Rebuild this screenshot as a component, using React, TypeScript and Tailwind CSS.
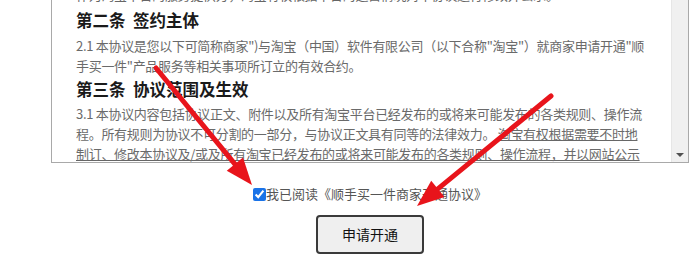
import React from "react";

const font = { fontFamily: '"Microsoft YaHei", "Noto Sans CJK SC", sans-serif' };

function Arrow({ x1, y1, x2, y2 }: { x1: number; y1: number; x2: number; y2: number }) {
  const dx = x2 - x1;
  const dy = y2 - y1;
  const len = Math.hypot(dx, dy);
  const ux = dx / len;
  const uy = dy / len;
  const nx = -uy;
  const ny = ux;
  const hl = 27;
  const hw = 10.5;
  const bx = x2 - hl * ux;
  const by = y2 - hl * uy;
  const pts = `${x2},${y2} ${bx + hw * nx},${by + hw * ny} ${bx - hw * nx},${by - hw * ny}`;
  return (
    <g>
      <line x1={x1} y1={y1} x2={bx + ux * 2} y2={by + uy * 2} stroke="#e8141b" strokeWidth={5} strokeLinecap="round" />
      <polygon points={pts} fill="#e8141b" />
    </g>
  );
}

export default function App() {
  return (
    <div className="relative w-[700px] h-[274px] bg-white overflow-hidden" style={font}>
      <div className="ml-[51px] w-[638px] flex flex-col items-center">
        <div className="w-full h-[163px] border-x border-b border-[#a9a9a9] flex overflow-hidden">
          <div className="flex-1 overflow-hidden pl-[24px]">
            <div className="mt-[-15px] flex flex-col whitespace-nowrap font-['Noto_Sans_CJK_SC',sans-serif]">
              <div className="h-[20px] leading-[20px] text-[13px] text-[#666] tracking-[-0.3px]">
                作为淘宝平台的服务提供方，淘宝有权根据平台的运营情况对本协议进行修改并公示。
              </div>
              <div className="mt-[3px] h-[24px] leading-[24px] text-[16.5px] font-bold text-[#1a1a1a]">
                第二条&nbsp;&nbsp;签约主体
              </div>
              <div className="mt-[4px] text-[13px] leading-[20px] text-[#6a6a6a] tracking-[-0.3px]">
                <div>2.1 本协议是您以下可简称商家")与淘宝（中国）软件有限公司（以下合称"淘宝"）就商家申请开通"顺</div>
                <div>手买一件"产品服务等相关事项所订立的有效合约。</div>
              </div>
              <div className="mt-[1px] h-[24px] leading-[24px] text-[16.5px] font-bold text-[#1a1a1a]">
                第三条&nbsp;&nbsp;协议范围及生效
              </div>
              <div className="mt-[3px] text-[13px] leading-[20px] text-[#6a6a6a] tracking-[-0.3px]">
                <div>3.1 本协议内容包括协议正文、附件以及所有淘宝平台已经发布的或将来可能发布的各类规则、操作流</div>
                <div>
                  程。所有规则为协议不可分割的一部分，与协议正文具有同等的法律效力。
                  <span className="underline decoration-[#666]"> 淘宝有权根据需要不时地</span>
                </div>
                <div className="underline decoration-[#666]">
                  制订、修改本协议及/或及所有淘宝已经发布的或将来可能发布的各类规则、操作流程，并以网站公示
                </div>
              </div>
            </div>
          </div>
          <div className="w-[17px] h-full bg-[#f0f0f0] border-l border-[#e6e6e6] flex flex-col justify-end items-center pb-[5px]">
            <div className="w-0 h-0 border-l-[4px] border-r-[4px] border-t-[4px] border-l-transparent border-r-transparent border-t-[#505050]" />
          </div>
        </div>
        <label className="mt-[23px] flex items-center text-[13px] leading-[16px] text-[#555] font-['Noto_Sans_CJK_SC',sans-serif]">
          <input type="checkbox" defaultChecked className="m-0 w-[13px] h-[13px] accent-[#1a73e8]" />
          <span>我已阅读《顺手买一件商家开通协议》</span>
        </label>
        <button className="mt-[13px] w-[108px] h-[39px] rounded-[4px] border-2 border-[#3a3a3a] bg-[#efefef] text-[14px] text-[#111] font-['Noto_Sans_CJK_SC',sans-serif]">
          申请开通
        </button>
      </div>
      <svg className="absolute left-0 top-0 pointer-events-none" width={700} height={274}>
        <Arrow x1={156} y1={68} x2={252} y2={185} />
        <Arrow x1={551} y1={96} x2={417} y2={206} />
      </svg>
    </div>
  );
}
